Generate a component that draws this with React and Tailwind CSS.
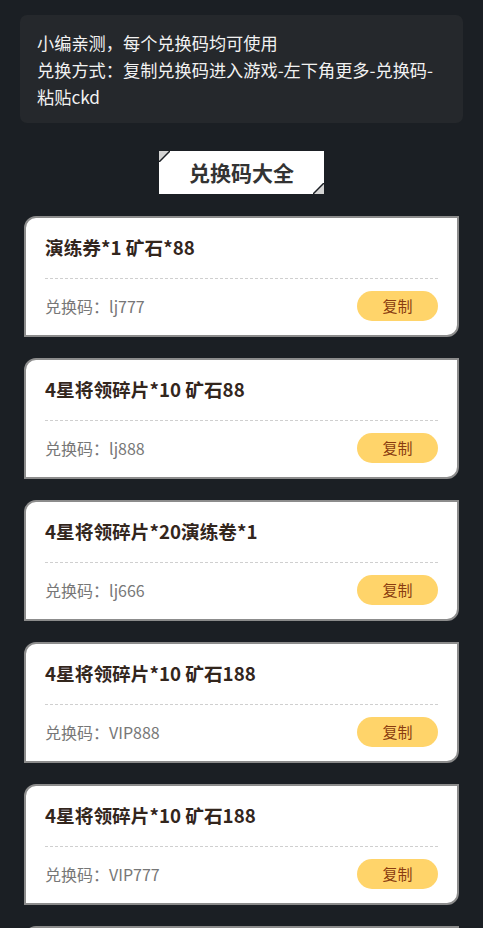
import React from 'react';

const codes = [
    { title: '演练券*1 矿石*88', code: 'lj777' },
    { title: '4星将领碎片*10 矿石88', code: 'lj888' },
    { title: '4星将领碎片*20演练卷*1', code: 'lj666' },
    { title: '4星将领碎片*10 矿石188', code: 'VIP888' },
    { title: '4星将领碎片*10 矿石188', code: 'VIP777' },
    { title: '4星将领碎片*10 矿石188', code: 'VIP666' },
];

const Corner = ({ className }) => (
    <svg className={className} width="11" height="11" viewBox="0 0 11 11">
        <path d="M0 0 H11 L0 11 Z" fill="#d4d4d4" />
        <path d="M11 0 L0 11" stroke="#1b1f24" strokeWidth="1.5" />
    </svg>
);

const CodeCard = ({ item }) => (
    <div className="mx-[24px] mb-[21px] bg-white border-2 border-[#8c8c8c] rounded-tl-[12px] rounded-br-[12px] px-[19px] pt-[15px] pb-[14px]">
        <div className="text-[18.7px] leading-[28px] font-bold text-[#33261d]">{item.title}</div>
        <div className="mt-[17px] border-t border-dashed border-[#cfcfcf]" />
        <div className="mt-[12px] flex items-center justify-between">
            <div className="text-[16px] text-[#777]">兑换码：{item.code}</div>
            <button className="w-[81px] h-[30px] rounded-full bg-[#ffd46a] text-[15px] text-[#8a3c10]">
                复制
            </button>
        </div>
    </div>
);

export default function App() {
    return (
        <div
            className="min-h-screen bg-[#1b1f24] pt-[15px] overflow-hidden"
            style={{ fontFamily: '"Noto Sans CJK SC", "Noto Sans", sans-serif' }}
        >
            <div className="mx-[20px] rounded-[7px] bg-[#25282c] pl-[17px] pr-[22px] pt-[14px] pb-[13px] text-[17.2px] leading-[27px] text-[#f2f2f2]">
                小编亲测，每个兑换码均可使用
                <br />
                兑换方式：复制兑换码进入游戏-左下角更多-兑换码-粘贴ckd
            </div>
            <div className="flex justify-center mt-[28px] mb-[22px]">
                <div className="relative w-[165px] h-[43px] bg-white flex items-center justify-center text-[21px] font-bold text-[#333]">
                    <Corner className="absolute left-0 top-0" />
                    兑换码大全
                    <Corner className="absolute right-0 bottom-0 rotate-180" />
                </div>
            </div>
            {codes.map((item, i) => (
                <CodeCard key={i} item={item} />
            ))}
        </div>
    );
}
